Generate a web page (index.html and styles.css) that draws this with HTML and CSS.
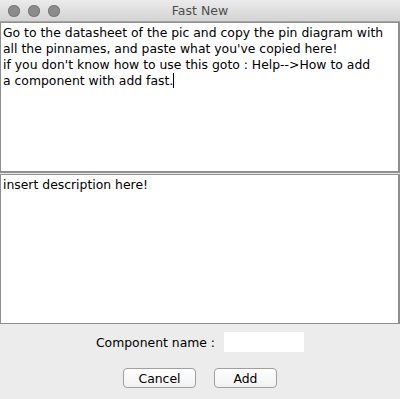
FILE: index.html
```html
<!DOCTYPE html>
<html lang="en">
<head>
  <meta charset="UTF-8" />
  <title>Fast New</title>
  <link rel="stylesheet" href="styles.css">
</head>
<body>
  <div class="window">
    <div class="titlebar">
      <div class="lights">
        <span class="light"></span>
        <span class="light"></span>
        <span class="light"></span>
      </div>
      <div class="title">Fast New</div>
    </div>

    <div class="pane pane-pins">Go to the datasheet of the pic and copy the pin diagram with
all the pinnames, and paste what you've copied here!
if you don't know how to use this goto : Help--&gt;How to add
a component with add fast.<span class="caret"></span></div>

    <div class="pane pane-desc">insert description here!</div>

    <div class="form">
      <div class="name-row">
        <span class="label">Component name :</span>
        <span class="field"></span>
      </div>
      <div class="buttons">
        <button class="btn btn-cancel">Cancel</button>
        <button class="btn btn-add">Add</button>
      </div>
    </div>
  </div>
</body>
</html>
```

FILE: styles.css
```css
body {
  margin: 0;
  font-family: 'DejaVu Sans', sans-serif;
  background: #ececec;
}

.window {
  width: 400px;
  height: 399px;
  display: flex;
  flex-direction: column;
  background: #ececec;
}

.titlebar {
  height: 22px;
  position: relative;
  background: linear-gradient(#ebebeb, #d3d3d3);
  border-bottom: 1px solid #a6a6a6;
  box-sizing: border-box;
}

.lights {
  position: absolute;
  left: 8px;
  top: 5px;
  display: flex;
  gap: 8px;
}

.light {
  width: 12px;
  height: 12px;
  border-radius: 50%;
  background: #8c8c8c;
  box-shadow: inset 0 0 0 1px #7a7a7a;
}

.title {
  text-align: center;
  font-size: 12.5px;
  line-height: 22px;
  color: #4d4d4d;
}

.pane {
  background: #fff;
  border: 1px solid #8e8e8e;
  border-right-width: 2px;
  box-sizing: border-box;
  width: 400px;
  padding: 2px 2px;
  font-size: 12.4px;
  line-height: 16px;
  color: #000;
  white-space: pre;
}

.pane-pins {
  height: 151px;
  border-bottom-width: 2px;
}

.pane-desc {
  margin-top: 1px;
  height: 150px;
}

.caret {
  display: inline-block;
  width: 1px;
  height: 15px;
  background: #000;
  vertical-align: -3px;
}

.form {
  display: flex;
  flex-direction: column;
  align-items: center;
  padding-top: 8px;
}

.name-row {
  display: flex;
  align-items: center;
  gap: 9px;
  height: 20px;
  margin-left: 0;
}

.label {
  font-size: 12.4px;
  color: #000;
}

.field {
  width: 80px;
  height: 20px;
  background: #fff;
}

.buttons {
  display: flex;
  gap: 18px;
  margin-top: 16px;
}

.btn {
  height: 20px;
  padding: 0;
  font-family: 'DejaVu Sans', sans-serif;
  font-size: 12.4px;
  background: linear-gradient(#ffffff, #f1f1f1);
  border: 1px solid #a0a0a0;
  border-radius: 4px;
  color: #000;
}

.btn-cancel {
  width: 73px;
}

.btn-add {
  width: 63px;
}
```
